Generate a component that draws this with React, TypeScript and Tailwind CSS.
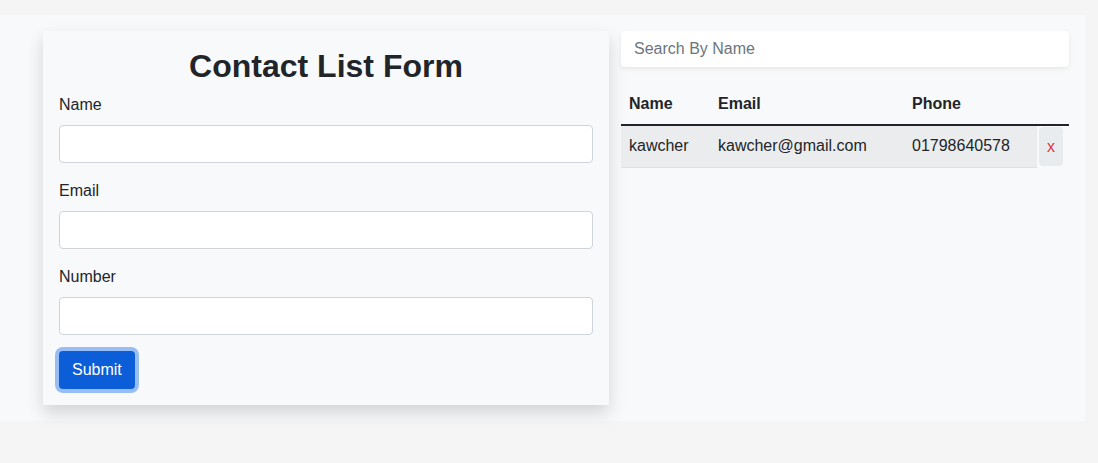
import React, { useState } from "react";

interface Contact {
  name: string;
  email: string;
  phone: string;
}

const font = { fontFamily: '"Liberation Sans", Arial, sans-serif' };

function Field({ label, value, onChange }: { label: string; value: string; onChange: (v: string) => void }) {
  return (
    <div className="mb-4">
      <label className="block mb-2 text-base leading-6 text-[#212529]">{label}</label>
      <input
        type="text"
        value={value}
        onChange={(e) => onChange(e.target.value)}
        className="block w-full h-[38px] px-3 rounded-[4px] border border-[#ced4da] bg-white text-base text-[#212529] outline-none"
      />
    </div>
  );
}

export default function App() {
  const [name, setName] = useState("");
  const [email, setEmail] = useState("");
  const [phone, setPhone] = useState("");
  const [search, setSearch] = useState("");
  const [contacts, setContacts] = useState<Contact[]>([
    { name: "kawcher", email: "kawcher@gmail.com", phone: "01798640578" },
  ]);

  const visible = contacts.filter((c) => c.name.toLowerCase().includes(search.toLowerCase()));

  return (
    <div className="min-h-[463px] bg-[#f5f5f5] pt-[15px]" style={font}>
      <div className="w-[1085px] bg-[#f8f9fa] pl-[43px] py-4 flex gap-3 items-start">
        {/* Form card */}
        <form
          className="w-[566px] bg-[#f8f9fa] p-4 shadow-[0_8px_16px_rgba(0,0,0,0.15)]"
          onSubmit={(e) => {
            e.preventDefault();
            if (!name) return;
            setContacts([...contacts, { name, email, phone }]);
            setName("");
            setEmail("");
            setPhone("");
          }}
        >
          <h1 className="text-center text-[32px] leading-[38px] font-bold text-[#212529] mb-2">Contact List Form</h1>
          <Field label="Name" value={name} onChange={setName} />
          <Field label="Email" value={email} onChange={setEmail} />
          <Field label="Number" value={phone} onChange={setPhone} />
          <button
            type="submit"
            className="h-[38px] px-[13px] rounded-[4px] bg-[#0b5ed7] text-white text-base leading-6 shadow-[0_0_0_4px_#98bdf5]"
          >
            Submit
          </button>
        </form>

        {/* List */}
        <div className="w-[448px]">
          <input
            type="text"
            placeholder="Search By Name"
            value={search}
            onChange={(e) => setSearch(e.target.value)}
            className="block w-full h-9 px-[13px] rounded-[4px] bg-white text-base text-[#212529] placeholder:text-[#6c757d] outline-none shadow-[0_2px_4px_rgba(0,0,0,0.075)]"
          />
          <table className="mt-[17px] w-full border-collapse text-base text-[#212529]">
            <thead>
              <tr className="border-b-2 border-[#212529]">
                <th className="w-[89px] px-2 py-2 text-left font-bold leading-6">Name</th>
                <th className="w-[194px] px-2 py-2 text-left font-bold leading-6">Email</th>
                <th className="w-[133px] px-2 py-2 text-left font-bold leading-6">Phone</th>
                <th className="w-[32px]"></th>
              </tr>
            </thead>
            <tbody>
              {visible.map((c, i) => (
                <tr key={i}>
                  <td className="px-2 pt-2 pb-[9px] leading-6 bg-[#ebeced] border-b border-[#dee2e6]">{c.name}</td>
                  <td className="px-2 pt-2 pb-[9px] leading-6 bg-[#ebeced] border-b border-[#dee2e6]">{c.email}</td>
                  <td className="px-2 pt-2 pb-[9px] leading-6 bg-[#ebeced] border-b border-[#dee2e6]">{c.phone}</td>
                  <td className="px-[2px] pt-[1px] pb-0 align-top">
                    <button
                      onClick={() => setContacts(contacts.filter((x) => x !== c))}
                      className="h-[39px] w-6 rounded-[4px] bg-[#e9ecef] text-[#dc3545] text-base leading-6"
                    >
                      x
                    </button>
                  </td>
                </tr>
              ))}
            </tbody>
          </table>
        </div>
      </div>
    </div>
  );
}
